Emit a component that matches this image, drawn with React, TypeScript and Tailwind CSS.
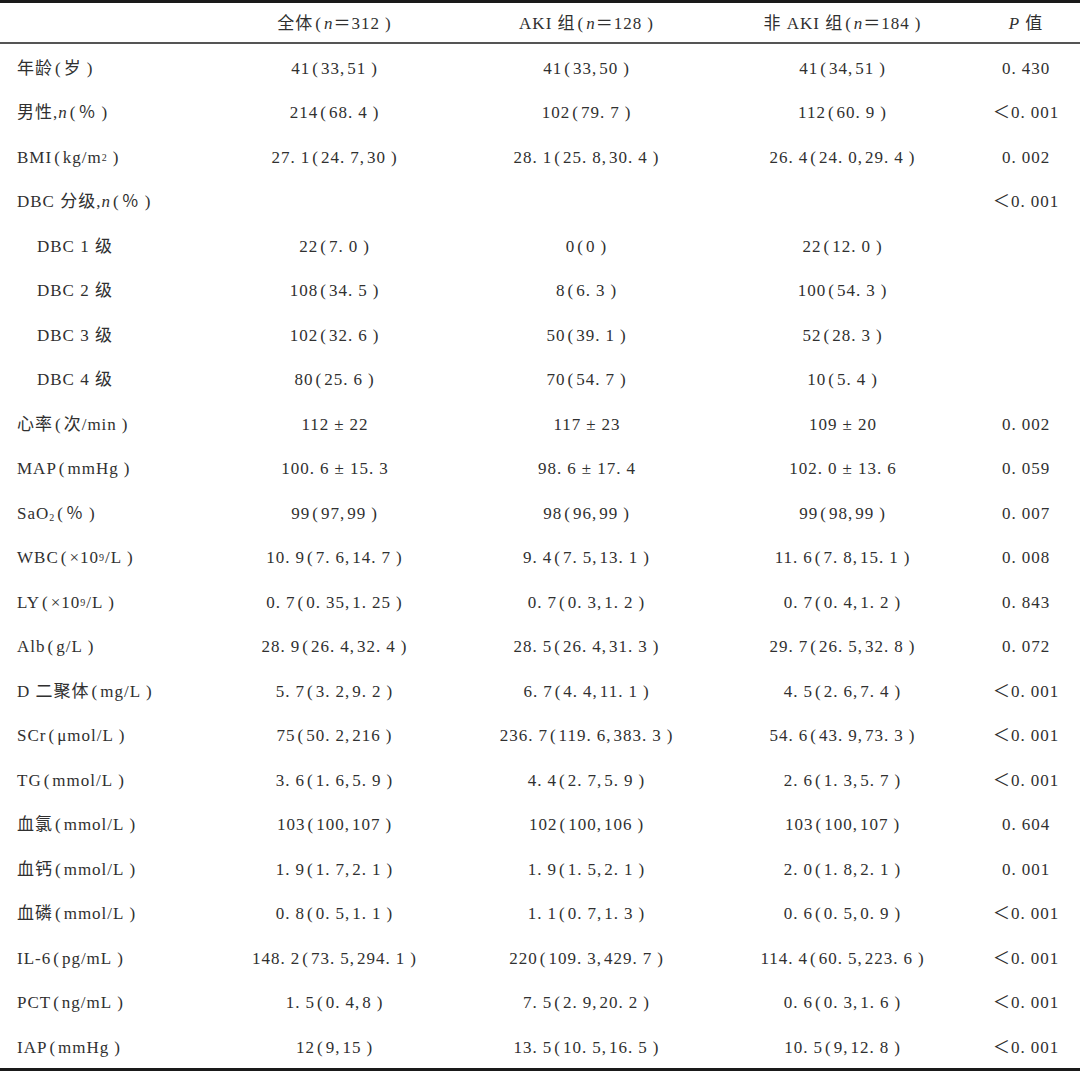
import React from "react";

const I = ({ children }: { children: React.ReactNode }) => <i className="italic">{children}</i>;
const Sup = ({ children }: { children: React.ReactNode }) => (
  <sup className="text-[10px] relative -top-[2px]">{children}</sup>
);
const Sub = ({ children }: { children: React.ReactNode }) => (
  <sub className="text-[10px]">{children}</sub>
);
const L = () => <span className="ml-[2px] mr-[2px]">(</span>;
const R = () => <span className="ml-[5px] mr-[1px]">)</span>;

type Row = { label: React.ReactNode; v: string[]; p: string; indent?: boolean };

const rows: Row[] = [
  { label: <>年龄<L />岁<R /></>, v: ["41(33,51)", "41(33,50)", "41(34,51)"], p: "0.430" },
  { label: <>男性,<I>n</I><L />％<R /></>, v: ["214(68.4)", "102(79.7)", "112(60.9)"], p: "<0.001" },
  { label: <>BMI<L />kg/m<Sup>2</Sup><R /></>, v: ["27.1(24.7,30)", "28.1(25.8,30.4)", "26.4(24.0,29.4)"], p: "0.002" },
  { label: <>DBC 分级,<I>n</I><L />％<R /></>, v: ["", "", ""], p: "<0.001" },
  { label: <>DBC 1 级</>, v: ["22(7.0)", "0(0)", "22(12.0)"], p: "", indent: true },
  { label: <>DBC 2 级</>, v: ["108(34.5)", "8(6.3)", "100(54.3)"], p: "", indent: true },
  { label: <>DBC 3 级</>, v: ["102(32.6)", "50(39.1)", "52(28.3)"], p: "", indent: true },
  { label: <>DBC 4 级</>, v: ["80(25.6)", "70(54.7)", "10(5.4)"], p: "", indent: true },
  { label: <>心率<L />次/min<R /></>, v: ["112±22", "117±23", "109±20"], p: "0.002" },
  { label: <>MAP<L />mmHg<R /></>, v: ["100.6±15.3", "98.6±17.4", "102.0±13.6"], p: "0.059" },
  { label: <>SaO<Sub>2</Sub><L />％<R /></>, v: ["99(97,99)", "98(96,99)", "99(98,99)"], p: "0.007" },
  { label: <>WBC<L />×10<Sup>9</Sup>/L<R /></>, v: ["10.9(7.6,14.7)", "9.4(7.5,13.1)", "11.6(7.8,15.1)"], p: "0.008" },
  { label: <>LY<L />×10<Sup>9</Sup>/L<R /></>, v: ["0.7(0.35,1.25)", "0.7(0.3,1.2)", "0.7(0.4,1.2)"], p: "0.843" },
  { label: <>Alb<L />g/L<R /></>, v: ["28.9(26.4,32.4)", "28.5(26.4,31.3)", "29.7(26.5,32.8)"], p: "0.072" },
  { label: <>D 二聚体<L />mg/L<R /></>, v: ["5.7(3.2,9.2)", "6.7(4.4,11.1)", "4.5(2.6,7.4)"], p: "<0.001" },
  { label: <>SCr<L />μmol/L<R /></>, v: ["75(50.2,216)", "236.7(119.6,383.3)", "54.6(43.9,73.3)"], p: "<0.001" },
  { label: <>TG<L />mmol/L<R /></>, v: ["3.6(1.6,5.9)", "4.4(2.7,5.9)", "2.6(1.3,5.7)"], p: "<0.001" },
  { label: <>血氯<L />mmol/L<R /></>, v: ["103(100,107)", "102(100,106)", "103(100,107)"], p: "0.604" },
  { label: <>血钙<L />mmol/L<R /></>, v: ["1.9(1.7,2.1)", "1.9(1.5,2.1)", "2.0(1.8,2.1)"], p: "0.001" },
  { label: <>血磷<L />mmol/L<R /></>, v: ["0.8(0.5,1.1)", "1.1(0.7,1.3)", "0.6(0.5,0.9)"], p: "<0.001" },
  { label: <>IL-6<L />pg/mL<R /></>, v: ["148.2(73.5,294.1)", "220(109.3,429.7)", "114.4(60.5,223.6)"], p: "<0.001" },
  { label: <>PCT<L />ng/mL<R /></>, v: ["1.5(0.4,8)", "7.5(2.9,20.2)", "0.6(0.3,1.6)"], p: "<0.001" },
  { label: <>IAP<L />mmHg<R /></>, v: ["12(9,15)", "13.5(10.5,16.5)", "10.5(9,12.8)"], p: "<0.001" },
];

function Val({ s }: { s: string }) {
  if (!s) return null;
  const out: React.ReactNode[] = [];
  let buf = "";
  const flush = () => {
    if (buf) {
      out.push(buf);
      buf = "";
    }
  };
  Array.from(s).forEach((c, k) => {
    if (c === "(") {
      flush();
      out.push(<L key={k} />);
    } else if (c === ")") {
      flush();
      out.push(<R key={k} />);
    } else if (c === ".") {
      flush();
      out.push(
        <span key={k} className="mr-[5px]">
          .
        </span>
      );
    } else if (c === "±") {
      flush();
      out.push(
        <span key={k} className="mx-[5px]">
          ±
        </span>
      );
    } else if (c === "<") {
      flush();
      out.push(<span key={k}>＜</span>);
    } else if (c === ",") {
      flush();
      out.push(
        <span key={k} className="mr-[2px]">
          ,
        </span>
      );
    } else {
      buf += c;
    }
  });
  flush();
  return <>{out}</>;
}

const grid = "grid grid-cols-[210px_250px_254px_258px_1fr] items-center";

export default function App() {
  return (
    <div
      className="w-[1080px] h-[1080px] bg-white text-[#303030] text-[17px] leading-none tracking-[1px]"
      style={{ fontFamily: '"Liberation Serif", "Noto Sans CJK SC", serif' }}
    >
      <div className="border-t-[3px] border-[#1a1a1a]">
        <div className={`${grid} h-[41px] pt-[2px] border-b-2 border-[#555]`}>
          <div />
          <div className="text-center">
            全体<L />
            <I>n</I>＝312<R />
          </div>
          <div className="text-center">
            AKI 组<L />
            <I>n</I>＝128<R />
          </div>
          <div className="text-center">
            非 AKI 组<L />
            <I>n</I>＝184<R />
          </div>
          <div className="text-center">
            <I>P</I> 值
          </div>
        </div>
        <div className="border-b-[3px] border-[#1a1a1a]">
          {rows.map((r, i) => (
            <div key={i} className={`${grid} h-[44.5px] pt-[4px]`}>
              <div className={`whitespace-nowrap ${r.indent ? "pl-[37px]" : "pl-[17px]"}`}>{r.label}</div>
              {r.v.map((s, j) => (
                <div key={j} className="text-center whitespace-nowrap">
                  <Val s={s} />
                </div>
              ))}
              <div className="text-center whitespace-nowrap">
                <Val s={r.p} />
              </div>
            </div>
          ))}
        </div>
      </div>
    </div>
  );
}
